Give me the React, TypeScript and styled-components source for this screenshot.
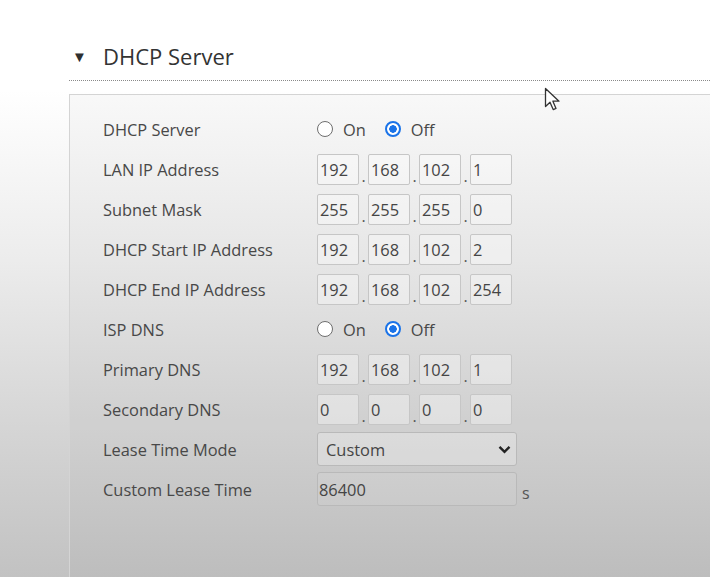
import React from 'react'
import styled, { createGlobalStyle } from 'styled-components'

const GlobalStyle = createGlobalStyle`
  html, body {
    margin: 0;
    padding: 0;
  }
  body {
    font-family: 'Open Sans', 'Noto Sans', sans-serif;
    color: #444;
    background: linear-gradient(to bottom, #ffffff 0px, #ffffff 90px, #ececec 260px, #d6d6d6 420px, #c2c2c2 577px);
    min-height: 577px;
  }
`

type Row =
  | { kind: 'radio'; label: string; value: 'on' | 'off' }
  | { kind: 'ip'; label: string; parts: string[] }
  | { kind: 'select'; label: string; value: string }
  | { kind: 'text'; label: string; value: string; unit: string }

const rows: Row[] = [
  { kind: 'radio', label: 'DHCP Server', value: 'off' },
  { kind: 'ip', label: 'LAN IP Address', parts: ['192', '168', '102', '1'] },
  { kind: 'ip', label: 'Subnet Mask', parts: ['255', '255', '255', '0'] },
  { kind: 'ip', label: 'DHCP Start IP Address', parts: ['192', '168', '102', '2'] },
  { kind: 'ip', label: 'DHCP End IP Address', parts: ['192', '168', '102', '254'] },
  { kind: 'radio', label: 'ISP DNS', value: 'off' },
  { kind: 'ip', label: 'Primary DNS', parts: ['192', '168', '102', '1'] },
  { kind: 'ip', label: 'Secondary DNS', parts: ['0', '0', '0', '0'] },
  { kind: 'select', label: 'Lease Time Mode', value: 'Custom' },
  { kind: 'text', label: 'Custom Lease Time', value: '86400', unit: 's' },
]

const IpField = ({ parts }: { parts: string[] }) => (
  <IpGroup>
    {parts.map((p, i) => (
      <React.Fragment key={i}>
        {i > 0 && <IpDot>.</IpDot>}
        <IpBox defaultValue={p} />
      </React.Fragment>
    ))}
  </IpGroup>
)

const RadioField = ({ name, value }: { name: string; value: string }) => (
  <RadioGroup>
    <RadioLabel>
      <Radio type="radio" name={name} defaultChecked={value === 'on'} />
      On
    </RadioLabel>
    <RadioLabel>
      <Radio type="radio" name={name} defaultChecked={value === 'off'} />
      Off
    </RadioLabel>
  </RadioGroup>
)

const Cursor = () => (
  <CursorWrap>
    <svg width="18" height="26" viewBox="0 0 18 26">
      <path
        d="M1.5 1.5 L1.5 19.5 L6 15.2 L9.2 22.6 L12 21.4 L8.9 14.2 L15 14.2 Z"
        fill="#fff"
        stroke="#333"
        strokeWidth="1.3"
        strokeLinejoin="round"
      />
    </svg>
  </CursorWrap>
)

const App = () => {
  return (
    <Page>
      <GlobalStyle />
      <SectionHeader>
        <Toggle>▼</Toggle>
        <Title>DHCP Server</Title>
      </SectionHeader>
      <Panel>
        <FormGrid>
          {rows.map((row, i) => (
            <React.Fragment key={i}>
              <Label>{row.label}</Label>
              <Control>
                {row.kind === 'radio' && <RadioField name={'r' + i} value={row.value} />}
                {row.kind === 'ip' && <IpField parts={row.parts} />}
                {row.kind === 'select' && (
                  <SelectWrap>
                    <Select defaultValue={row.value}>
                      <option>Custom</option>
                      <option>Default</option>
                    </Select>
                    <Chevron width="13" height="9" viewBox="0 0 13 9">
                      <path d="M1.5 1.8 L6.5 6.8 L11.5 1.8" fill="none" stroke="#222" strokeWidth="2.4" />
                    </Chevron>
                  </SelectWrap>
                )}
                {row.kind === 'text' && (
                  <>
                    <TextBox defaultValue={row.value} />
                    <Unit>{row.unit}</Unit>
                  </>
                )}
              </Control>
            </React.Fragment>
          ))}
        </FormGrid>
      </Panel>
      <Cursor />
    </Page>
  )
}

export default App

const Page = styled.div`
  position: relative;
  min-height: 577px;
  padding-left: 69px;
  display: flex;
  flex-direction: column;
  box-sizing: border-box;
  overflow: hidden;
`

const SectionHeader = styled.div`
  height: 81px;
  box-sizing: border-box;
  padding-top: 32px;
  display: flex;
  align-items: center;
  border-bottom: 1px dotted #8a8a8a;
`

const Toggle = styled.span`
  font-size: 15px;
  color: #2f2f2f;
  width: 34px;
  padding-left: 3px;
  box-sizing: border-box;
  margin-top: -1px;
`

const Title = styled.h2`
  margin: 0;
  font-size: 22px;
  font-weight: 400;
  color: #333;
  line-height: 30px;
`

const Panel = styled.div`
  flex: 1;
  margin-top: 13px;
  border-top: 1px solid #d4d4d4;
  border-left: 1px solid #d4d4d4;
  background: rgba(0, 0, 0, 0.025);
  padding: 14px 0 0 33px;
`

const FormGrid = styled.div`
  display: grid;
  grid-template-columns: 214px auto;
  grid-auto-rows: 40px;
  align-items: center;
`

const Label = styled.div`
  font-size: 16.4px;
  color: #484848;
  white-space: nowrap;
`

const Control = styled.div`
  display: flex;
  align-items: center;
`

const RadioGroup = styled.div`
  display: flex;
  align-items: center;
  gap: 19px;
`

const RadioLabel = styled.label`
  display: flex;
  align-items: center;
  gap: 10px;
  font-size: 16.4px;
  color: #484848;
`

const Radio = styled.input`
  appearance: none;
  margin: 0;
  width: 16px;
  height: 16px;
  border-radius: 50%;
  border: 1px solid #6e6e6e;
  background: #fff;
  box-sizing: border-box;
  &:checked {
    border: 2px solid #1a73e8;
    background: radial-gradient(circle, #1a73e8 0 3.5px, #fff 4px);
  }
`

const IpGroup = styled.div`
  display: flex;
  align-items: flex-end;
`

const IpBox = styled.input`
  width: 42px;
  height: 31px;
  box-sizing: border-box;
  border: 1px solid #c6c6c6;
  border-radius: 2px;
  background: rgba(255, 255, 255, 0.35);
  font-family: inherit;
  font-size: 16.4px;
  color: #454545;
  padding: 0 0 0 2px;
  outline: none;
`

const IpDot = styled.span`
  width: 9px;
  text-align: center;
  font-size: 16px;
  line-height: 18px;
  color: #555;
`

const SelectWrap = styled.div`
  position: relative;
  width: 200px;
`

const Select = styled.select`
  appearance: none;
  width: 200px;
  height: 34px;
  box-sizing: border-box;
  border: 1px solid #b9b9b9;
  border-radius: 3px;
  background: rgba(255, 255, 255, 0.25);
  font-family: inherit;
  font-size: 16.4px;
  color: #454545;
  padding: 0 0 0 8px;
  outline: none;
`

const Chevron = styled.svg`
  position: absolute;
  right: 6px;
  top: 13px;
  pointer-events: none;
`

const TextBox = styled.input`
  width: 200px;
  height: 34px;
  box-sizing: border-box;
  border: 1px solid #b9b9b9;
  border-radius: 3px;
  background: rgba(255, 255, 255, 0.08);
  font-family: inherit;
  font-size: 16.4px;
  color: #454545;
  padding: 0 0 0 1px;
  outline: none;
`

const Unit = styled.span`
  font-size: 16px;
  color: #555;
  margin: 8px 0 0 5px;
`

const CursorWrap = styled.div`
  position: absolute;
  left: 544px;
  top: 87px;
  pointer-events: none;
`
